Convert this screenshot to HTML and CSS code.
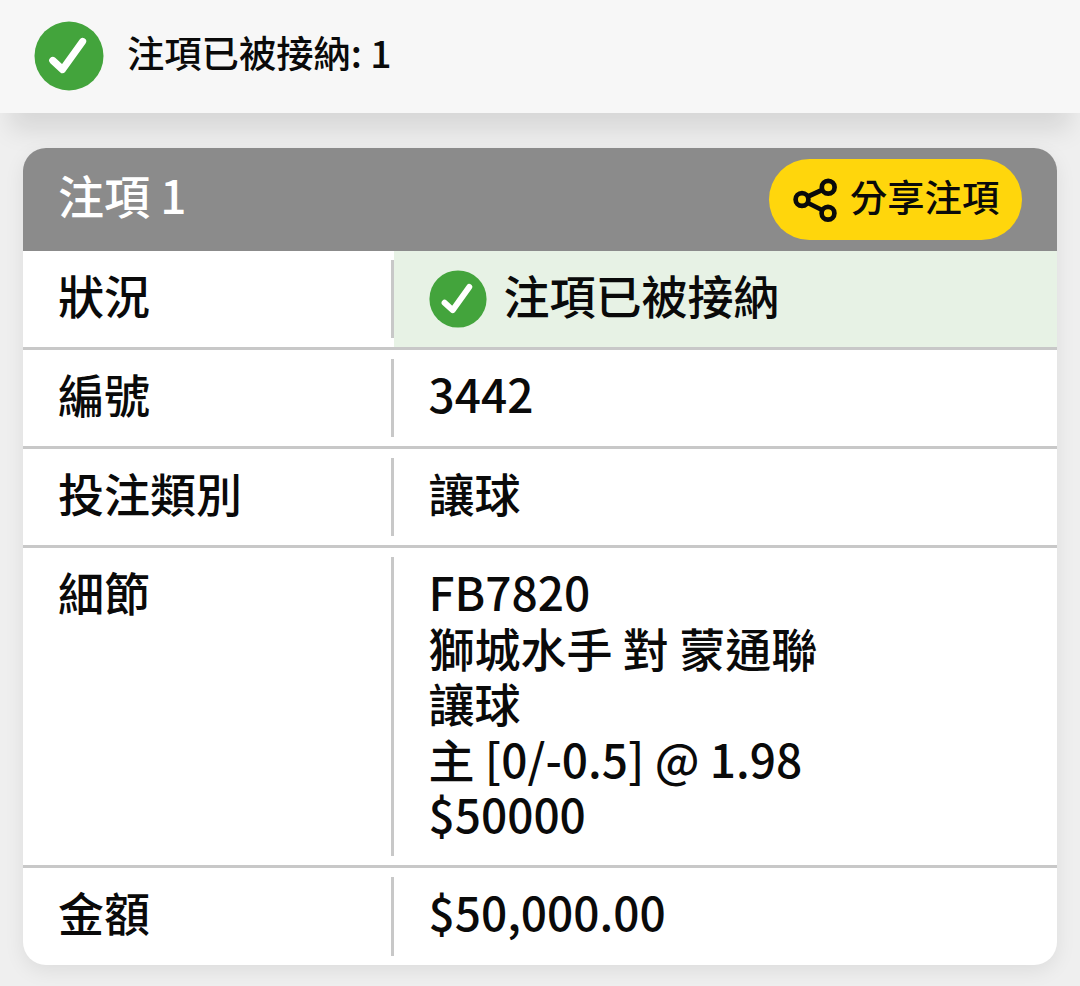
FILE: index.html
```html
<!DOCTYPE html>
<html lang="zh-Hant">
<head>
    <meta charset="UTF-8">
    <meta name="viewport" content="width=device-width, initial-scale=1.0">
    <title>注項已被接納</title>
    <link rel="stylesheet" href="styles.css">
</head>
<body>

    <!-- Top message -->
    <div class="message-bar">
        <svg class="tick-icon" viewBox="0 0 70 70">
            <circle cx="35" cy="35" r="34.5" fill="#43a43c"/>
            <path d="M18.8 39.5 L28.5 48.5 L48.6 20.5" fill="none" stroke="#fff" stroke-width="7.2" stroke-linecap="round" stroke-linejoin="round"/>
        </svg>
        <span>注項已被接納: 1</span>
    </div>

    <!-- Bet slip -->
    <div class="bet-card">
        <div class="bet-header">
            <h2>注項 1</h2>
            <button class="share-button">
                <svg class="share-icon" viewBox="0 0 46 46" fill="none" stroke="#0a0a0a" stroke-width="4.7">
                    <circle cx="10" cy="22.5" r="6.4"/>
                    <circle cx="36.2" cy="10.2" r="6.4"/>
                    <circle cx="36" cy="36.2" r="6.4"/>
                    <path d="M16 19.5 L30 13 M16 26 L30 33"/>
                </svg>
                <span>分享注項</span>
            </button>
        </div>

        <div class="bet-row">
            <div class="label">狀況</div>
            <div class="value accepted">
                <svg class="tick-icon" viewBox="0 0 70 70">
                    <circle cx="35" cy="35" r="34.5" fill="#43a43c"/>
                    <path d="M18.8 39.5 L28.5 48.5 L48.6 20.5" fill="none" stroke="#fff" stroke-width="7.2" stroke-linecap="round" stroke-linejoin="round"/>
                </svg>
                <span>注項已被接納</span>
            </div>
        </div>
        <div class="bet-row">
            <div class="label">編號</div>
            <div class="value">3442</div>
        </div>
        <div class="bet-row">
            <div class="label">投注類別</div>
            <div class="value">讓球</div>
        </div>
        <div class="bet-row details">
            <div class="label">細節</div>
            <div class="value">
                FB7820<br>
                獅城水手 對 蒙通聯<br>
                讓球<br>
                主 [0/-0.5] @ 1.98<br>
                $50000
            </div>
        </div>
        <div class="bet-row">
            <div class="label">金額</div>
            <div class="value">$50,000.00</div>
        </div>
    </div>

</body>
</html>
```

FILE: styles.css
```css
* {
    box-sizing: border-box;
}

body {
    margin: 0;
    height: 986px;
    overflow: hidden;
    background-color: #efefef;
    color: #0a0a0a;
    font-family: "Noto Sans CJK TC", sans-serif;
    font-weight: 500;
}

h2 {
    margin: 0;
}

.tick-icon {
    flex: none;
    width: 70px;
    height: 70px;
}

.message-bar {
    display: flex;
    align-items: center;
    gap: 23px;
    height: 113px;
    padding: 0 34px 2px;
    background-color: #f7f7f7;
    box-shadow: 0 27px 24px -10px rgba(0, 0, 0, 0.1);
    font-size: 37.3px;
    line-height: 56px;
}

.message-bar span {
    padding-bottom: 8px;
}

.bet-card {
    width: 1034px;
    margin: 35px 0 0 23px;
    border-radius: 23px;
    background-color: #fff;
    box-shadow: 0 6px 20px rgba(0, 0, 0, 0.08);
    overflow: hidden;
}

.bet-header {
    display: flex;
    justify-content: space-between;
    height: 103px;
    padding: 11px 35px 0;
    background-color: #8b8b8b;
    color: #fff;
}

.bet-header h2 {
    font-size: 46px;
    font-weight: 500;
    line-height: 70px;
}

.share-button {
    display: flex;
    align-items: center;
    gap: 12px;
    width: 253px;
    height: 81px;
    padding: 0 23px;
    border: none;
    border-radius: 41px;
    background-color: #ffd60c;
    color: #0a0a0a;
    font: inherit;
    font-size: 37.3px;
    line-height: 56px;
    white-space: nowrap;
}

.share-button span {
    padding-bottom: 8px;
}

.share-icon {
    flex: none;
    width: 46px;
    height: 46px;
}

.bet-row {
    display: flex;
    height: 99px;
    border-bottom: 3px solid #c8c8c8;
    font-size: 46px;
    line-height: 55.5px;
}

.bet-row.details {
    height: 320px;
}

.bet-row:last-child {
    height: 97px;
    border-bottom: none;
}

.label {
    width: 371px;
    margin: 9px 0;
    padding: 7px 0 0 35px;
    border-right: 3px solid #c8c8c8;
}

.value {
    flex: 1;
    padding: 16px 0 0 34.5px;
}

.accepted {
    display: flex;
    gap: 17px;
    background-color: #e7f2e5;
}

.accepted .tick-icon {
    width: 58px;
    height: 58px;
    margin-top: 3px;
}
```
